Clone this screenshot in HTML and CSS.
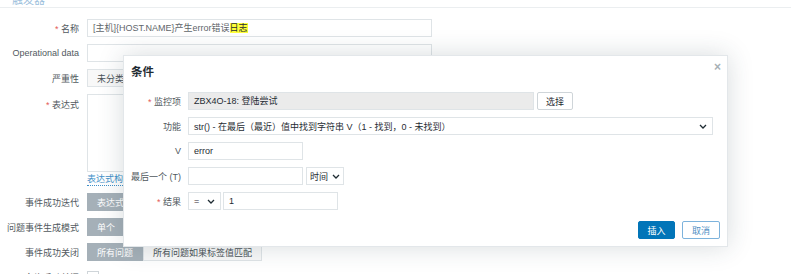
FILE: index.html
```html
<!DOCTYPE html>
<html lang="zh">
<head>
    <meta charset="UTF-8">
    <meta name="viewport" content="width=device-width, initial-scale=1.0">
    <title>触发器</title>
    <link rel="stylesheet" href="styles.css">
</head>
<body>
    <div class="page-head">
        <span class="tab">触发器</span>
    </div>

    <div class="form">
        <div class="row">
            <label class="label"><span class="req">*</span> 名称</label>
            <div class="field">
                <div class="input wide">[主机]{HOST.NAME}产生error错误<span class="mark">日志</span></div>
            </div>
        </div>
        <div class="row">
            <label class="label">Operational data</label>
            <div class="field"><div class="input wide"></div></div>
        </div>
        <div class="row">
            <label class="label">严重性</label>
            <div class="field">
                <div class="segments">
                    <span class="seg plain">未分类</span>
                    <span class="seg plain">信息</span>
                    <span class="seg plain">警告</span>
                </div>
            </div>
        </div>
        <div class="row tall">
            <label class="label"><span class="req">*</span> 表达式</label>
            <div class="field"><div class="textarea"></div></div>
        </div>
        <div class="row link-row">
            <span class="label"></span>
            <div class="field"><a class="link">表达式构造器</a></div>
        </div>
        <div class="row">
            <label class="label">事件成功迭代</label>
            <div class="field">
                <div class="segments">
                    <span class="seg on">表达式</span>
                    <span class="seg plain">恢复表达式</span>
                    <span class="seg plain">无</span>
                </div>
            </div>
        </div>
        <div class="row">
            <label class="label">问题事件生成模式</label>
            <div class="field">
                <div class="segments">
                    <span class="seg on">单个</span>
                    <span class="seg plain">多重</span>
                </div>
            </div>
        </div>
        <div class="row">
            <label class="label">事件成功关闭</label>
            <div class="field">
                <div class="segments">
                    <span class="seg on">所有问题</span>
                    <span class="seg plain">所有问题如果标签值匹配</span>
                </div>
            </div>
        </div>
        <div class="row">
            <label class="label">允许手动关闭</label>
            <div class="field"><span class="checkbox"></span></div>
        </div>
    </div>

    <div class="dialog">
        <div class="dialog-head">
            <h4 class="dialog-title">条件</h4>
            <span class="close">&times;</span>
        </div>
        <div class="dialog-body">
            <label class="label"><span class="req">*</span> 监控项</label>
            <div class="field">
                <div class="input readonly item">ZBX4O-18: 登陆尝试</div>
                <button class="btn-alt">选择</button>
            </div>

            <label class="label">功能</label>
            <div class="field">
                <div class="select func">
                    <span>str() - 在最后（最近）值中找到字符串 V（1 - 找到，0 - 未找到）</span>
                    <svg class="chevron" width="8" height="5" viewBox="0 0 8 5"><polyline points="1,1 4,4 7,1" fill="none" stroke="#1f2c33" stroke-width="1.3"/></svg>
                </div>
            </div>

            <label class="label">V</label>
            <div class="field"><div class="input short">error</div></div>

            <label class="label">最后一个 (T)</label>
            <div class="field">
                <div class="input short"></div>
                <div class="select unit">
                    <span>时间</span>
                    <svg class="chevron" width="8" height="5" viewBox="0 0 8 5"><polyline points="1,1 4,4 7,1" fill="none" stroke="#1f2c33" stroke-width="1.3"/></svg>
                </div>
            </div>

            <label class="label"><span class="req">*</span> 结果</label>
            <div class="field tight">
                <div class="select op">
                    <span>=</span>
                    <svg class="chevron" width="8" height="5" viewBox="0 0 8 5"><polyline points="1,1 4,4 7,1" fill="none" stroke="#1f2c33" stroke-width="1.3"/></svg>
                </div>
                <div class="input short">1</div>
            </div>
        </div>
        <div class="dialog-foot">
            <button class="btn-primary">插入</button>
            <button class="btn-cancel">取消</button>
        </div>
    </div>
</body>
</html>
```

FILE: styles.css
```css
* {
    margin: 0;
    padding: 0;
    box-sizing: border-box;
}

html {
    overflow: hidden;
}

body {
    font-family: "Liberation Sans", "Noto Sans CJK SC", sans-serif;
    font-size: 9px;
    color: #3c454b;
    background-color: white;
    width: 791px;
    height: 274px;
    overflow: hidden;
}

.page-head {
    height: 8px;
    border-bottom: 1px solid #ebeef0;
    overflow: hidden;
    padding-left: 12px;
}

.tab {
    display: block;
    margin-top: -9px;
    font-size: 11px;
    color: #9cc0dc;
}

.form {
    margin-top: 11px;
}

.row {
    display: flex;
    align-items: center;
    gap: 8px;
    height: 18px;
    margin-bottom: 7px;
}

.row.tall {
    height: 78px;
    align-items: flex-start;
}

.row.tall .label {
    padding-top: 4px;
}

.row.link-row {
    height: 14px;
    margin-top: -7px;
    margin-bottom: 7px;
    align-items: flex-end;
}

.label {
    width: 79px;
    flex-shrink: 0;
    text-align: right;
    white-space: nowrap;
    color: #51595e;
}

.req {
    color: #e45959;
}

.field {
    display: flex;
    align-items: center;
    gap: 3px;
    height: 100%;
}

.field.tight {
    gap: 2px;
}

.input {
    height: 18px;
    border: 1px solid #dfe4e7;
    background-color: white;
    padding: 0 5px;
    line-height: 16px;
    color: #1f2c33;
    white-space: nowrap;
    overflow: hidden;
}

.input.wide {
    width: 345px;
    color: #5f666b;
}

.mark {
    background-color: #ffff3a;
    color: #1f2c33;
}

.textarea {
    width: 345px;
    height: 78px;
    border: 1px solid #dfe4e7;
}

.link {
    color: #3f8fc8;
    line-height: 12px;
    border-bottom: 1px dotted #3f8fc8;
}

.segments {
    display: flex;
    height: 18px;
}

.seg {
    display: flex;
    align-items: center;
    padding: 0 9px;
    border: 1px solid #dfe4e7;
    white-space: nowrap;
}

.seg.on {
    background-color: #a5b0b8;
    border-color: #a5b0b8;
    color: white;
}

.seg.plain {
    background-color: #f8f8f8;
    color: #4a5257;
}

.checkbox {
    width: 12px;
    height: 12px;
    border: 1px solid #cfd5d9;
    background-color: white;
}

/* condition dialog */
.dialog {
    position: absolute;
    left: 123px;
    top: 55px;
    width: 605px;
    height: 192px;
    background-color: white;
    border: 1px solid #e3e7ea;
    box-shadow: 0 0 24px rgba(40, 60, 70, 0.18);
    display: flex;
    flex-direction: column;
}

.dialog-head {
    display: flex;
    justify-content: space-between;
    padding: 9px 6px 0 7px;
}

.dialog-title {
    font-size: 11.5px;
    font-weight: bold;
    color: #1f2c33;
    line-height: 14px;
}

.close {
    font-size: 12px;
    font-weight: bold;
    line-height: 10px;
    color: #a7b0b5;
    margin-top: -3px;
}

.dialog-body {
    display: grid;
    grid-template-columns: 57px auto;
    column-gap: 7px;
    row-gap: 7px;
    grid-auto-rows: 18px;
    margin-top: 13px;
}

.dialog-body .label {
    width: auto;
    align-self: center;
}

.readonly {
    background-color: #ebebeb;
}

.input.item {
    width: 346px;
}

.input.short {
    width: 115px;
}

.select {
    height: 18px;
    border: 1px solid #dfe4e7;
    background-color: white;
    display: flex;
    align-items: center;
    justify-content: space-between;
    padding: 0 5px;
    color: #1f2c33;
    white-space: nowrap;
}

.select.func {
    width: 525px;
}

.select.unit {
    width: 38px;
    padding: 0 3px;
}

.select.op {
    width: 33px;
}

.chevron {
    flex-shrink: 0;
}

button {
    font-family: inherit;
    font-size: 9px;
    height: 18px;
    border-radius: 2px;
    cursor: pointer;
}

.btn-alt {
    width: 36px;
    background-color: white;
    border: 1px solid #cfd5d9;
    color: #1f2c33;
}

.dialog-foot {
    margin-top: auto;
    display: flex;
    justify-content: flex-end;
    gap: 7px;
    padding: 0 7px 7px 0;
}

.btn-primary {
    width: 37px;
    background-color: #0275b8;
    border: 1px solid #0275b8;
    color: white;
}

.btn-cancel {
    width: 38px;
    background-color: white;
    border: 1px solid #7db3dc;
    color: #4f8fc4;
}
```
